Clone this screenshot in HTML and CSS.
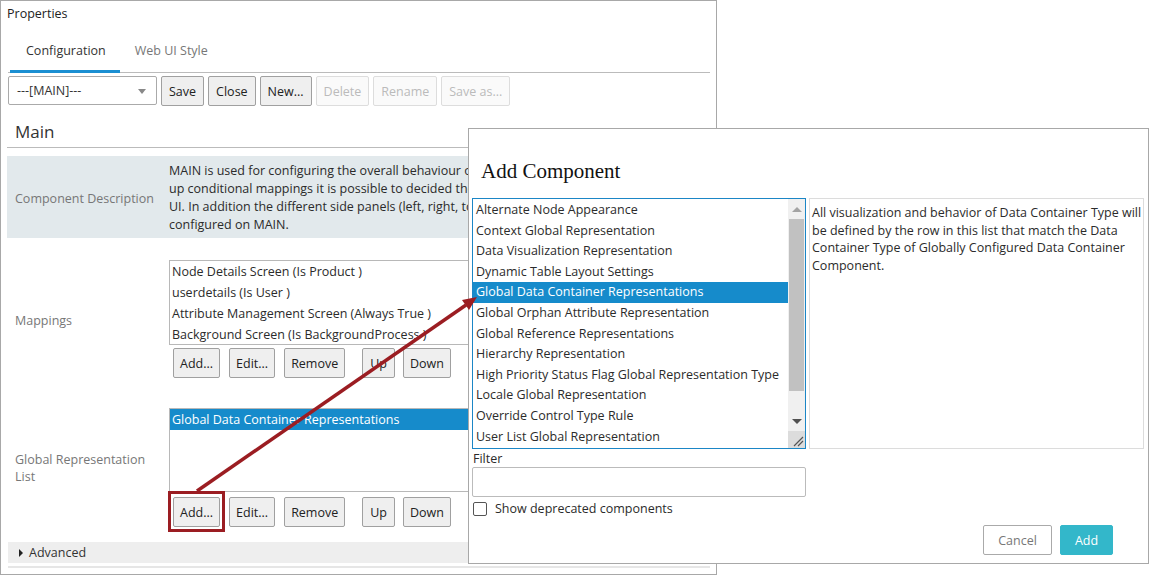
FILE: index.html
```html
<!DOCTYPE html>
<html lang="en">
  <head>
    <meta charset="UTF-8" />
    <title>Properties</title>
    <link rel="stylesheet" href="styles.css">
  </head>
  <body>
    <div class="props">
      <div class="props-title">Properties</div>

      <div class="tabs">
        <div class="tab active">Configuration</div>
        <div class="tab">Web UI Style</div>
      </div>

      <div class="toolbar">
        <div class="select">---[MAIN]---<span class="caret"></span></div>
        <button>Save</button>
        <button>Close</button>
        <button>New...</button>
        <button disabled>Delete</button>
        <button disabled>Rename</button>
        <button disabled>Save as...</button>
      </div>

      <h2 class="section-title">Main</h2>

      <div class="row row-desc">
        <div class="row-label">Component Description</div>
        <div class="row-body desc-text">
          MAIN is used for configuring the overall behaviour of<br>
          up conditional mappings it is possible to decided the<br>
          UI. In addition the different side panels (left, right, to<br>
          configured on MAIN.
        </div>
      </div>

      <div class="row row-map">
        <div class="row-label">Mappings</div>
        <div class="row-body">
          <div class="listbox list-map">
            <div class="item">Node Details Screen (Is Product )</div>
            <div class="item">userdetails (Is User )</div>
            <div class="item">Attribute Management Screen (Always True )</div>
            <div class="item">Background Screen (Is BackgroundProcess )</div>
          </div>
          <div class="btns">
            <button>Add...</button>
            <button>Edit...</button>
            <button>Remove</button>
            <button class="btn-up">Up</button>
            <button>Down</button>
          </div>
        </div>
      </div>

      <div class="row row-global">
        <div class="row-label">Global Representation<br>List</div>
        <div class="row-body">
          <div class="listbox list-global">
            <div class="item selected">Global Data Container Representations</div>
          </div>
          <div class="btns">
            <button>Add...</button>
            <button>Edit...</button>
            <button>Remove</button>
            <button class="btn-up">Up</button>
            <button>Down</button>
          </div>
        </div>
      </div>

      <div class="advanced"><span class="tri"></span>Advanced</div>
      <div class="footer-line"></div>
    </div>

    <div class="dialog">
      <h1 class="dlg-title">Add Component</h1>
      <div class="dlg-main">
        <div class="dlg-list">
          <div class="dlg-items">
            <div class="item">Alternate Node Appearance</div>
            <div class="item">Context Global Representation</div>
            <div class="item">Data Visualization Representation</div>
            <div class="item">Dynamic Table Layout Settings</div>
            <div class="item selected">Global Data Container Representations</div>
            <div class="item">Global Orphan Attribute Representation</div>
            <div class="item">Global Reference Representations</div>
            <div class="item">Hierarchy Representation</div>
            <div class="item">High Priority Status Flag Global Representation Type</div>
            <div class="item">Locale Global Representation</div>
            <div class="item">Override Control Type Rule</div>
            <div class="item">User List Global Representation</div>
          </div>
          <div class="scrollbar">
            <div class="sb-btn"><span class="sb-up"></span></div>
            <div class="sb-thumb"></div>
            <div class="sb-track"></div>
            <div class="sb-btn"><span class="sb-down"></span></div>
            <div class="sb-grip">
              <svg width="17" height="17" viewBox="0 0 17 17">
                <path d="M6 15 L15 6 M10 15 L15 10" stroke="#555" stroke-width="1.2" fill="none"/>
              </svg>
            </div>
          </div>
        </div>
        <div class="dlg-desc">
          All visualization and behavior of Data Container Type will<br>
          be defined by the row in this list that match the Data<br>
          Container Type of Globally Configured Data Container<br>
          Component.
        </div>
      </div>

      <div class="filter-label">Filter</div>
      <div class="filter-input"></div>

      <label class="check-row"><span class="checkbox"></span>Show deprecated components</label>

      <div class="dlg-actions">
        <button class="btn-cancel">Cancel</button>
        <button class="btn-add">Add</button>
      </div>
    </div>

    <!-- red call-out: box round the Add... button and arrow to the dialog -->
    <svg class="annot" width="1149" height="575" viewBox="0 0 1149 575">
      <rect x="169.5" y="492.5" width="54" height="38" fill="none" stroke="#9b1d22" stroke-width="3"/>
      <line x1="197" y1="491" x2="466" y2="305" stroke="#9b1d22" stroke-width="3.5"/>
      <polygon points="477,297 469,310 462,300" fill="#9b1d22"/>
    </svg>
  </body>
</html>
```

FILE: styles.css
```css
body {
  margin: 0;
  padding: 0;
  background-color: white;
  font-family: "Open Sans", "Noto Sans", sans-serif;
  font-size: 12.5px;
  color: #2b2b2b;
  width: 1149px;
  height: 575px;
  overflow: hidden;
  position: relative;
}

button {
  font-family: inherit;
  font-size: 12.5px;
  color: #222;
  height: 30px;
  padding: 0 6px;
  background-color: #efefef;
  border: 1px solid #a0a0a0;
  border-radius: 2px;
  cursor: pointer;
}

button:disabled {
  color: #bbb;
  background-color: #fafafa;
  border-color: #ddd;
}

.props {
  width: 717px;
  height: 575px;
  box-sizing: border-box;
  border: 1px solid #a8a8a8;
}

.props-title {
  height: 30px;
  padding: 4px 6px 0;
  box-sizing: border-box;
  line-height: 17px;
  color: #222;
}

.tabs {
  display: flex;
  margin: 0 6px 0 7px;
  border-bottom: 1px solid #bbb;
}

.tab {
  padding: 11px 14px 10px 15px;
  line-height: 18px;
  color: #777;
  border-bottom: 3px solid transparent;
  margin-bottom: -1px;
}

.tab.active {
  color: #333;
  border-bottom-color: #1b8fd2;
  margin-left: 2px;
  padding-left: 16px;
}

.toolbar {
  display: flex;
  gap: 4px;
  margin: 3px 0 0 7px;
}

.toolbar button {
  padding: 0 7px;
}

.select {
  position: relative;
  width: 149px;
  height: 29px;
  box-sizing: border-box;
  border: 1px solid #aaa;
  border-radius: 2px;
  padding-left: 8px;
  line-height: 27px;
  color: #333;
}

.caret {
  position: absolute;
  right: 10px;
  top: 12px;
  border-left: 4px solid transparent;
  border-right: 4px solid transparent;
  border-top: 5px solid #888;
}

.section-title {
  margin: 4px 6px 0;
  padding: 7px 8px 1px;
  line-height: 29px;
  font-size: 17px;
  font-weight: normal;
  color: #333;
  border-bottom: 1px solid #bbb;
}

.row {
  display: grid;
  grid-template-columns: 162px 1fr;
  align-items: center;
  margin: 0 6px;
}

.row-label {
  padding-left: 8px;
  color: #777;
  line-height: 17px;
}

.row-desc {
  margin-top: 8px;
  padding: 6px 0 4px;
  background-color: #e2e9ec;
}

.desc-text {
  line-height: 18px;
  white-space: nowrap;
  overflow: hidden;
}

.row-map {
  padding: 22px 0 25px;
}

.row-map .row-label {
  padding-top: 3px;
}

.row-global {
  padding: 5px 0 6px;
}

.listbox {
  border: 1px solid #b8b8b8;
  box-sizing: border-box;
  background: white;
}

.list-map {
  height: 85px;
}

.list-global {
  height: 84px;
}

.listbox .item {
  line-height: 21px;
  padding-left: 2px;
  white-space: nowrap;
}

.item.selected {
  background-color: #168bcb;
  color: white;
}

.btns {
  display: flex;
  gap: 9px;
  margin: 3px 0 0 4px;
}

.row-global .btns {
  margin-top: 5px;
}

.btns .btn-up {
  margin-left: 8px;
  margin-right: -1px;
  padding: 0 7px;
}

.advanced {
  margin: 9px 6px 0 7px;
  height: 21px;
  line-height: 21px;
  background-color: #eee;
  color: #333;
}

.tri {
  display: inline-block;
  margin: 0 6px 0 11px;
  border-top: 4px solid transparent;
  border-bottom: 4px solid transparent;
  border-left: 4px solid #222;
}

.footer-line {
  margin: 3px 6px 0 7px;
  height: 2px;
  background-color: #e6e6e6;
}

/* dialog */

.dialog {
  position: absolute;
  left: 468px;
  top: 128px;
  width: 681px;
  height: 436px;
  box-sizing: border-box;
  border: 1px solid #a8a8a8;
  background-color: white;
  padding: 0 3px;
}

.dlg-title {
  margin: 28px 0 13px 9px;
  line-height: 28px;
  font-family: "Liberation Serif", serif;
  font-size: 21px;
  font-weight: normal;
  color: #111;
}

.dlg-main {
  display: flex;
  gap: 3px;
  height: 251px;
}

.dlg-list {
  width: 334px;
  box-sizing: border-box;
  border: 1px solid #1b86c6;
  display: flex;
}

.dlg-items {
  flex: 1;
  overflow: hidden;
  padding-top: 1px;
}

.dlg-items .item {
  line-height: 20.6px;
  padding-left: 3px;
  white-space: nowrap;
}

.scrollbar {
  width: 17px;
  display: flex;
  flex-direction: column;
  background-color: #f0f0f0;
}

.sb-btn {
  height: 20px;
  display: flex;
  align-items: center;
  justify-content: center;
}

.sb-up {
  border-left: 5px solid transparent;
  border-right: 5px solid transparent;
  border-bottom: 5px solid #a3a3a3;
}

.sb-down {
  border-left: 5px solid transparent;
  border-right: 5px solid transparent;
  border-top: 5px solid #505050;
}

.sb-thumb {
  height: 172px;
  margin: 0 1px;
  background-color: #c1c1c1;
}

.sb-track {
  flex: 1;
}

.sb-grip {
  height: 17px;
  background-color: #dcdcdc;
}

.sb-grip svg {
  display: block;
}

.dlg-desc {
  width: 335px;
  box-sizing: border-box;
  border: 1px solid #dcdcdc;
  padding: 5px 2px;
  line-height: 17.5px;
  white-space: nowrap;
  overflow: hidden;
}

.filter-label {
  margin-top: 2px;
  line-height: 16px;
  padding-left: 1px;
}

.filter-input {
  width: 334px;
  height: 30px;
  box-sizing: border-box;
  border: 1px solid #bbb;
  border-radius: 2px;
}

.check-row {
  display: flex;
  align-items: center;
  gap: 8px;
  margin-top: 4px;
  padding-left: 1px;
  line-height: 15px;
}

.checkbox {
  width: 14px;
  height: 14px;
  box-sizing: border-box;
  border: 1px solid #555;
  border-radius: 2px;
}

.dlg-actions {
  display: flex;
  justify-content: flex-end;
  gap: 8px;
  margin: 9px 32px 0 0;
}

.btn-cancel {
  width: 69px;
  background-color: white;
  border: 1px solid #aaa;
  color: #777;
}

.btn-add {
  width: 53px;
  background-color: #33b7ca;
  border: 1px solid #33b7ca;
  color: white;
}

.annot {
  position: absolute;
  left: 0;
  top: 0;
  pointer-events: none;
}
```
